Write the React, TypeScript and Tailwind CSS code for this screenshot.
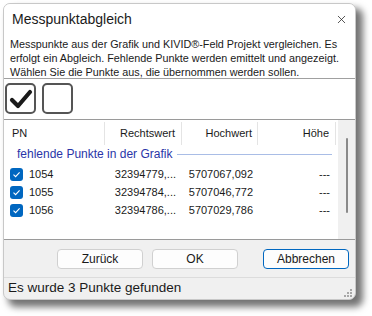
import { X } from 'lucide-react';

const rows = [
  { pn: '1054', rw: '32394779,...', hw: '5707067,092', h: '---' },
  { pn: '1055', rw: '32394784,...', hw: '5707046,772', h: '---' },
  { pn: '1056', rw: '32394786,...', hw: '5707029,786', h: '---' },
];

function RowCheck() {
  return (
    <span className="w-[13px] h-[13px] rounded-[3px] bg-[#0067c0] flex items-center justify-center shrink-0">
      <svg width="9" height="9" viewBox="0 0 9 9">
        <path d="M1.5 4.6 L3.6 6.6 L7.6 2.4" fill="none" stroke="#fff" strokeWidth="1.1" />
      </svg>
    </span>
  );
}

export default function App() {
  return (
    <div className="w-[372px] h-[316px] bg-white pt-[3px] pl-[3px] font-['Liberation_Sans',Arial,sans-serif] text-[#1a1a1a]">
      <div className="w-[353px] h-[297px] rounded-[7px] border border-[#c8c8c8] bg-[#f0f0f0] overflow-hidden flex flex-col shadow-[6px_6px_7px_1px_rgba(0,0,0,0.55)]">
        {/* title */}
        <div className="h-[31px] bg-white flex items-center justify-between pl-[8px] pr-[7px] shrink-0">
          <span className="text-[14px] text-[#1a1a1a]">Messpunktabgleich</span>
          <X className="w-[13px] h-[13px] text-[#222]" strokeWidth={1.4} />
        </div>

        <div className="bg-white px-[6px] pt-[2px] h-[44px] border-b border-[#a0a0a0] text-[10.8px] leading-[14px] whitespace-nowrap shrink-0">
          Messpunkte aus der Grafik und KIVID®-Feld Projekt vergleichen. Es
          <br />
          erfolgt ein Abgleich. Fehlende Punkte werden emittelt und angezeigt.
          <br />
          Wählen Sie die Punkte aus, die übernommen werden sollen.
        </div>

        {/* toggle buttons */}
        <div className="bg-white h-[40px] flex gap-[6px] pl-[1px] pt-[4px] shrink-0">
          <div className="w-[31px] h-[31px] rounded-[5px] border-2 border-[#555] flex items-center justify-center">
            <svg width="24" height="22" viewBox="0 0 24 22">
              <path d="M3 12 L9 18 L21 4" fill="none" stroke="#1a1a1a" strokeWidth="4.2" strokeLinejoin="round" strokeLinecap="round" />
            </svg>
          </div>
          <div className="w-[31px] h-[31px] rounded-[5px] border-2 border-[#555]" />
        </div>

        {/* list */}
        <div className="bg-white h-[121px] border-t border-b border-[#9a9a9a] flex shrink-0 text-[11px]">
          <div className="flex-1">
            <div className="h-[25px] flex items-center mt-[1px]">
              <div className="w-[101px] h-[23px] border-r border-[#e4e4e4] pl-[8px] flex items-center">PN</div>
              <div className="w-[77px] h-[23px] border-r border-[#e4e4e4] pr-[6px] flex items-center justify-end">Rechtswert</div>
              <div className="w-[76px] h-[23px] border-r border-[#e4e4e4] pr-[5px] flex items-center justify-end">Hochwert</div>
              <div className="w-[78px] h-[23px] border-r border-[#e4e4e4] pr-[6px] flex items-center justify-end">Höhe</div>
            </div>
            <div className="h-[16px] flex items-center pl-[13px] pr-[6px] gap-[5px]">
              <span className="text-[12px] text-[#2a35a8] whitespace-nowrap">fehlende Punkte in der Grafik</span>
              <div className="flex-1 h-px bg-[#a9bde6]" />
            </div>
            <div className="mt-[3px]">
              {rows.map(r => (
                <div key={r.pn} className="h-[18px] flex items-center">
                  <div className="w-[101px] flex items-center gap-[6px] pl-[6px]">
                    <RowCheck />
                    <span>{r.pn}</span>
                  </div>
                  <div className="w-[77px] text-right pr-[6px]">{r.rw}</div>
                  <div className="w-[76px] text-right pr-[5px]">{r.hw}</div>
                  <div className="w-[78px] text-right pr-[6px]">{r.h}</div>
                </div>
              ))}
            </div>
          </div>
          <div className="w-[17px] bg-[#f0f0f0] flex justify-center pt-[18px]">
            <div className="w-[2px] h-[75px] rounded-full bg-[#8a8a8a]" />
          </div>
        </div>

        {/* buttons */}
        <div className="h-[38px] flex items-center pl-[53px] gap-[9px] text-[12px] shrink-0 border-b border-[#dcdcdc]">
          <button className="w-[86px] h-[20px] bg-[#fdfdfd] border border-[#d0d0d0] rounded-[4px]">Zurück</button>
          <button className="w-[86px] h-[20px] bg-[#fdfdfd] border border-[#d0d0d0] rounded-[4px]">OK</button>
          <button className="ml-[16px] w-[86px] h-[20px] bg-[#fdfdfd] border border-[#0067c0] rounded-[4px]">Abbrechen</button>
        </div>

        {/* status */}
        <div className="flex-1 flex items-center justify-between pl-[4px] pr-[3px]">
          <span className="text-[13.5px]">Es wurde 3 Punkte gefunden</span>
          <svg width="8" height="8" viewBox="0 0 8 8" className="mt-[8px]">
            <rect x="6" y="0" width="2" height="2" fill="#a8a8a8" />
            <rect x="3" y="3" width="2" height="2" fill="#a8a8a8" />
            <rect x="6" y="3" width="2" height="2" fill="#a8a8a8" />
            <rect x="0" y="6" width="2" height="2" fill="#a8a8a8" />
            <rect x="3" y="6" width="2" height="2" fill="#a8a8a8" />
            <rect x="6" y="6" width="2" height="2" fill="#a8a8a8" />
          </svg>
        </div>
      </div>
    </div>
  );
}
